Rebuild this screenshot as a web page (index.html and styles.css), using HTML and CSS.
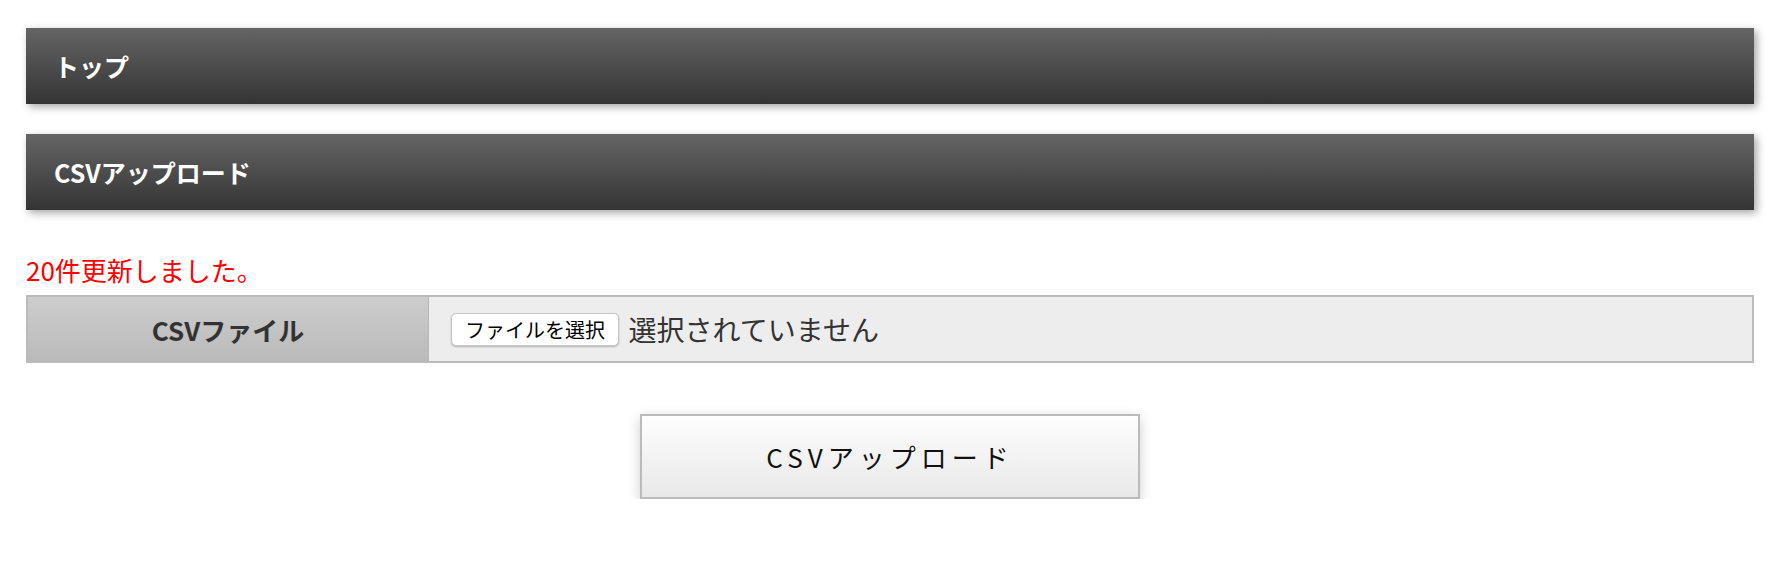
FILE: index.html
```html
<!DOCTYPE html>
<html>
  <head>
    <meta charset="utf-8">
    <title>CSVアップロード</title>
    <link rel="stylesheet" href="styles.css">
  </head>
  <body>
    <div id="wrap">
      <h2 class="bar">トップ</h2>
      <h2 class="bar">CSVアップロード</h2>

      <p class="msg">20件更新しました。</p>

      <form id="csvForm" onsubmit="return false;">
        <table class="form-table">
          <tr>
            <th>CSVファイル</th>
            <td>
              <span class="file-btn">ファイルを選択</span>
              <span class="file-name">選択されていません</span>
            </td>
          </tr>
        </table>
        <div class="center">
          <button type="submit" class="upload-btn">CSVアップロード</button>
        </div>
      </form>
    </div>
  </body>
</html>
```

FILE: styles.css
```css
body {margin: 0; background-color: #fff; font-family: "Noto Sans CJK JP", "Noto Sans", sans-serif; color: #333;}
#wrap {margin: 28px 23px 0 26px;}
.center {text-align: center;}

.bar {margin: 0 0 30px 0; height: 76px; line-height: 76px; padding: 0 0 0 28px; font-size: 25px; font-weight: bold; color: #fff;
  background: linear-gradient(#656565, #343434); box-shadow: 3px 3px 8px rgba(0,0,0,0.35);}
.bar + .bar {margin-bottom: 0;}

.msg {margin: 42px 0 7px 0; font-size: 26px; line-height: 36px; color: #f00;}

.form-table {width: 100%; border-collapse: collapse; border: 2px solid #bbb;}
.form-table th {width: 400px; height: 64px; padding: 0; font-size: 26px; font-weight: bold; color: #333;
  background: linear-gradient(#cdcdcd, #bababa); border-right: 1px solid #b5b5b5;}
.form-table td {padding: 0 0 0 22px; background-color: #ededed; vertical-align: middle;}

.file-btn {display: inline-block; vertical-align: middle; height: 31px; line-height: 31px; padding: 0 13px; font-size: 20px; color: #000;
  background-color: #fff; border: 1px solid #c6c6c6; border-radius: 5px; box-shadow: 0 1px 2px rgba(0,0,0,0.25);}
.file-name {vertical-align: middle; margin-left: 6px; font-size: 28px; color: #333;}

.upload-btn {margin-top: 51px; width: 500px; height: 85px; font-family: "Noto Sans CJK JP", "Noto Sans", sans-serif; font-size: 26px; letter-spacing: 5px; color: #111;
  background: linear-gradient(#fefefe, #e8e8e8); border: 2px solid #bbb; border-radius: 0; box-shadow: 0 4px 12px rgba(0,0,0,0.2); cursor: pointer;}
```
